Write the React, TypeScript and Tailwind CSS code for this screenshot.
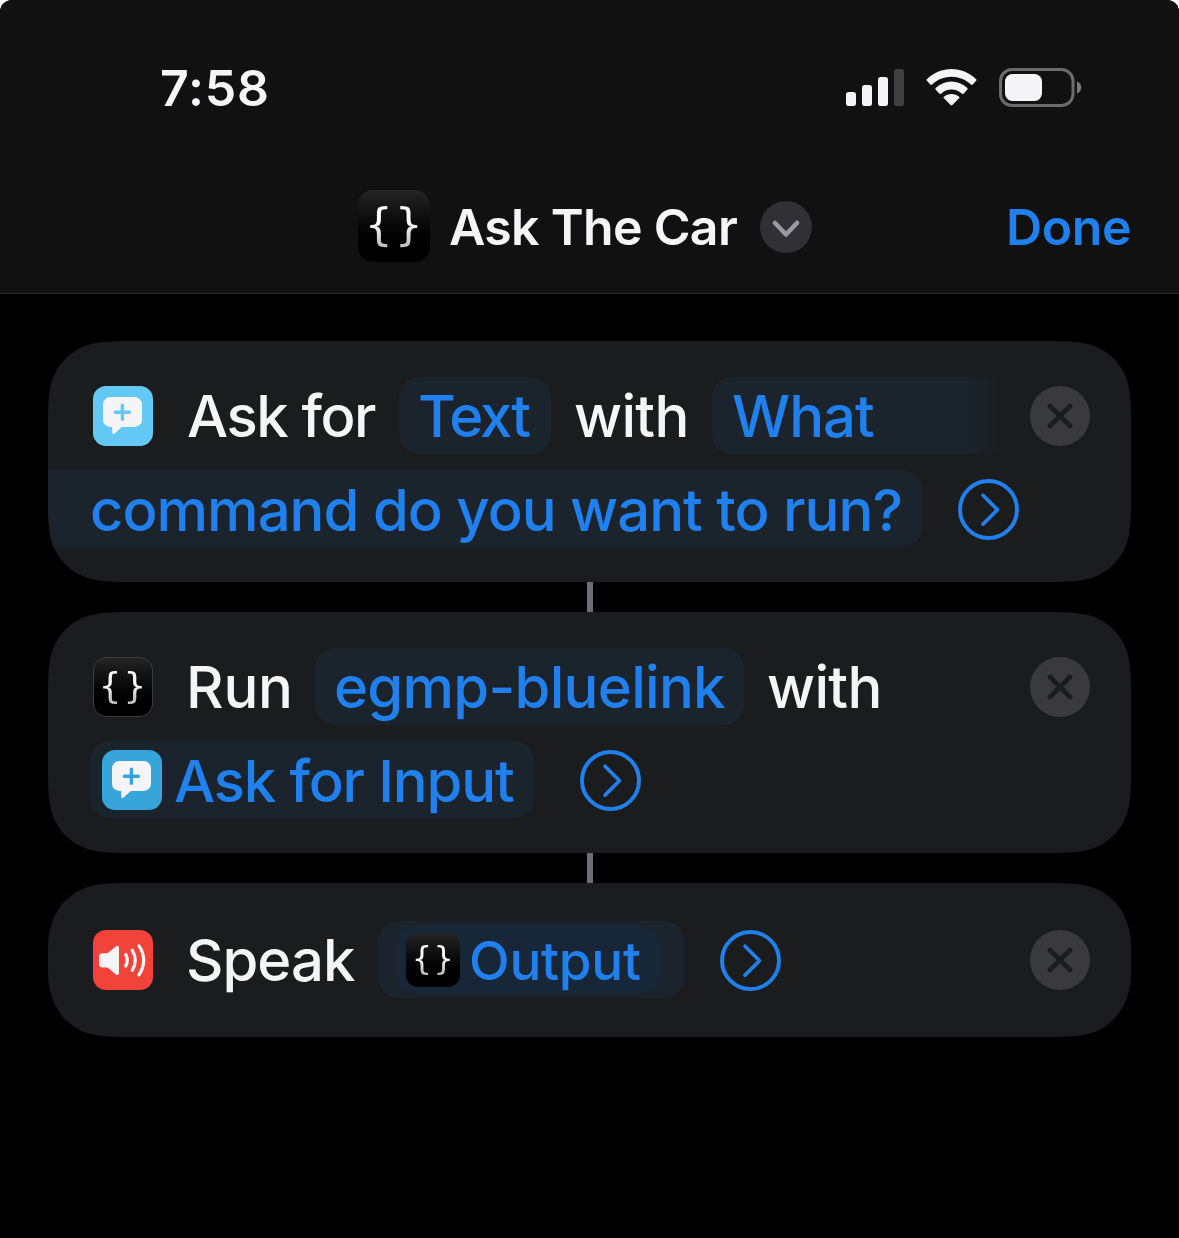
import type { ReactNode } from 'react';

/** Outline of a rectangle with continuous ("squircle") corners. */
function squircle(w: number, h: number, r: number) {
  const k = Math.min(1, h / 2 / (1.52866 * r));
  // corner control points, from the top edge to the right edge, as insets in units of r
  const pts: [number, number][] = [
    [1.52866, 0], [1.08849, 0], [0.868407, 0], [0.631494, 0.0749114],
    [0.372824, 0.16906], [0.16906, 0.372824], [0.0749114, 0.631494],
    [0, 0.868407], [0, 1.08849], [0, 1.52866],
  ];
  const p = pts.map(([x, y]) => [x * r, y * r * (y > 1 ? k : 1)]);
  const fmt = (q: number[][]) => {
    const s = q.map(([x, y]) => `${x.toFixed(2)} ${y.toFixed(2)}`);
    return `L${s[0]} C${s.slice(1, 4).join(' ')} C${s.slice(4, 7).join(' ')} C${s.slice(7, 10).join(' ')}`;
  };
  const rev = [...p].reverse();
  return (
    `M${w / 2} 0 ` +
    fmt(p.map(([x, y]) => [w - x, y])) +
    fmt(rev.map(([x, y]) => [w - x, h - y])) +
    fmt(p.map(([x, y]) => [x, h - y])) +
    fmt(rev.map(([x, y]) => [x, y])) +
    'Z'
  );
}

function Card({ height, children }: { height: number; children: ReactNode }) {
  return (
    <section
      className="flex w-[1083px] flex-col gap-4 bg-[#1b1c1d] pr-[41px] pl-[45px]"
      style={{ height, clipPath: `path('${squircle(1083, height, 60)}')` }}
    >
      {children}
    </section>
  );
}

function Connector() {
  return <div className="ml-[539px] h-[30px] w-1.5 bg-[#6b6d75]" />;
}

function BubbleIcon({ className }: { className: string }) {
  return (
    <svg viewBox="0 0 60 60" className={`size-[60px] shrink-0 rounded-[13px] ${className}`}>
      <path
        fill="#f5f5f7"
        d="M17.300 11h24.400a7.300 7.300 0 0 1 7.300 7.300v15.400a7.300 7.300 0 0 1-7.300 7.300H28.800l-7.100 6.600c-1 .9-2.500.3-2.500-1.100V41h-1.900a7.300 7.300 0 0 1-7.300-7.300V18.300a7.300 7.300 0 0 1 7.300-7.300Z"
      />
      <path d="M29.400 19.300v14M22.400 26.300h14" stroke="currentColor" strokeWidth="3.400" strokeLinecap="round" />
    </svg>
  );
}

function SpeakerIcon() {
  return (
    <svg viewBox="0 0 60 60" className="size-[60px] shrink-0 rounded-[13px] bg-[#f14339]" fill="none">
      <path
        fill="#f5f5f7"
        d="M9.500 23.300h4.300c.7 0 1.200-.2 1.700-.7l7.300-6.200c1.500-1.200 3.200-.5 3.200 1.400v25.200c0 1.900-1.700 2.600-3.200 1.400l-7.300-6.200c-.5-.4-1-.7-1.700-.7H9.500c-2.300 0-3.500-1.200-3.500-3.400v-7.400c0-2.200 1.200-3.400 3.500-3.400Z"
      />
      <g stroke="#f5f5f7" strokeWidth="3.300" strokeLinecap="round">
        <path d="M32.700 24.600c2 3.600 2 7.800 0 11.400" />
        <path d="M39.200 20.300c4 6.200 4 13.800 0 20" />
        <path d="M46 15.900c6.200 9 6.200 19.900 0 28.900" />
      </g>
    </svg>
  );
}

function BracesIcon({ className }: { className: string }) {
  return (
    <div
      className={`flex shrink-0 items-center justify-center bg-linear-to-b from-[#252525] to-black leading-[1.3] font-['DejaVu_Sans_Mono',monospace] ${className}`}
    >
      <span className="bg-linear-to-b from-white from-45% to-[#c4c4c4] to-80% bg-clip-text text-transparent">{'{}'}</span>
    </div>
  );
}

function Expand({ className }: { className: string }) {
  return (
    <svg viewBox="0 0 61 61" className={`mt-px size-[61px] shrink-0 text-[#1f80ee] ${className}`} fill="none" stroke="currentColor">
      <circle cx="30.500" cy="30.500" r="28.500" strokeWidth="4" />
      <path d="M25 16.300 39.500 30.700 25 45.100" strokeWidth="3.700" strokeLinecap="round" strokeLinejoin="round" />
    </svg>
  );
}

function Remove() {
  return (
    <svg viewBox="0 0 60 60" className="ml-auto size-[60px] shrink-0 rounded-full bg-[#3a393e]" fill="none">
      <path d="M20 20 40 40M40 20 20 40" stroke="#1b1c1d" strokeWidth="4.700" strokeLinecap="round" />
    </svg>
  );
}

const row = 'flex h-[77px] shrink-0 items-center whitespace-nowrap';
const pill = 'flex h-[77px] shrink-0 items-center rounded-[20px] bg-[#1b232c] text-[#1f80ee]';

function StatusIcons() {
  return (
    <div className="-mt-0.5 flex items-center">
      <svg viewBox="0 0 58 38" className="h-[38px] w-[58px]" fill="#f5f5f7">
        <rect x="0" y="24" width="10" height="14" rx="2.800" />
        <rect x="16" y="17" width="10" height="21" rx="2.800" />
        <rect x="32" y="9" width="10" height="29" rx="2.800" />
        <rect x="48" y="1" width="10" height="37" rx="2.800" fill="#414141" />
      </svg>
      <svg viewBox="0 0 17 12.300" className="ml-[22px] h-[37px] w-[51px]" fill="#f5f5f7" preserveAspectRatio="none">
        <path d="M8.500 2.600c2.400 0 4.700.9 6.500 2.600.1.100.3.100.5 0l1.200-1.300c.2-.2.2-.4 0-.5C12.100-1.100 4.900-1.100.3 3.400c-.2.100-.2.300 0 .5l1.200 1.300c.2.100.4.100.5 0C3.800 3.500 6.100 2.600 8.500 2.600Z" />
        <path d="M8.500 6.800c1.300 0 2.600.5 3.500 1.400.2.100.4.100.5 0l1.300-1.400c.1-.1.100-.3 0-.5-3-2.900-7.600-2.900-10.600 0-.1.200-.1.400 0 .5l1.300 1.400c.1.100.3.100.5 0 .9-.9 2.200-1.400 3.500-1.400Z" />
        <path d="M11 9.700c.2-.1.200-.4 0-.5-1.400-1.200-3.600-1.200-5 0-.2.100-.2.400 0 .5l2.200 2.300c.2.200.4.200.6 0L11 9.700Z" />
      </svg>
      <svg viewBox="0 0 83 39" className="ml-[22px] h-[39px] w-[83px]" fill="none">
        <rect x="1.500" y="1.500" width="72.500" height="36" rx="11.500" stroke="#6c6c6c" strokeWidth="3" />
        <rect x="6" y="6" width="37" height="27" rx="7.500" fill="#f5f5f7" />
        <path d="M78 13.500c2.600 1 4.200 3.300 4.200 6s-1.600 5-4.200 6Z" fill="#7b7b7b" />
      </svg>
    </div>
  );
}

export default function App() {
  return (
    <div className="h-[1238px] w-[1179px] overflow-hidden bg-white font-['Inter',sans-serif]">
      <div className="flex h-full flex-col overflow-hidden rounded-t-[12px] bg-black">
        <header className="h-[294px] shrink-0 border-b border-[#2a2a2b] bg-[#111111] pt-[63px]">
          <div className="flex h-[50px] items-center justify-between pr-[97px] pl-[160px]">
            <span className="text-[50px] leading-none font-semibold tracking-[0.8px] text-[#f5f5f7]">7:58</span>
            <StatusIcons />
          </div>
          <div className="mt-[77px] flex h-[72px] items-center pl-[358px] whitespace-nowrap">
            <BracesIcon className="size-[72px] rounded-[15px] pb-0.5 pl-[3px] text-[44px] tracking-[3.500px]" />
            <h1 className="mt-0.5 ml-[19px] w-[311px] text-[50px] leading-[74px] font-semibold tracking-[-0.7px] text-[#f5f5f7]">
              Ask The Car
            </h1>
            <svg viewBox="0 0 52 52" className="mt-0.5 size-[52px] shrink-0 rounded-full bg-[#313034]" fill="none">
              <path d="M15 22 26 33.500 37 22" stroke="#9b9aa0" strokeWidth="4.600" strokeLinecap="round" strokeLinejoin="round" />
            </svg>
            <span className="mt-0.5 ml-[194px] text-[50px] leading-[74px] font-semibold tracking-[-0.4px] text-[#1f80ee]">
              Done
            </span>
          </div>
        </header>

        <main className="flex flex-col pt-[47px] pl-12 text-[58px] leading-none font-medium text-[#f5f5f7]">
          <Card height={241}>
            <div className={`${row} mt-9`}>
              <BubbleIcon className="bg-[#63c8f3] text-[#63c8f3]" />
              <span className="ml-[34px] w-[212px] tracking-[-1.4px]">Ask for</span>
              <span className={`${pill} w-[152px] pl-[19px] tracking-[-2.1px]`}>Text</span>
              <span className="ml-[23px] w-[138px] tracking-[-0.7px]">with</span>
              <span className="flex h-[77px] w-[295px] shrink-0 items-center rounded-l-[20px] bg-linear-to-r from-[#1b232c] from-86% to-[#1b1c1d] pl-5 tracking-[-1px] text-[#1f80ee]">
                What
              </span>
              <Remove />
            </div>
            <div className={`${row} -ml-[45px]`}>
              <span className={`${pill} w-[874px] rounded-l-none pt-0.5 pl-[42px] tracking-[-0.97px]`}>
                command do you want to run?
              </span>
              <Expand className="ml-9" />
            </div>
          </Card>
          <Connector />
          <Card height={241}>
            <div className={`${row} mt-9`}>
              <BracesIcon className="size-[60px] rounded-[13px] border border-[#3c3c3c] pb-px pl-0.5 text-[36px] tracking-[3px]" />
              <span className="ml-[33px] w-[129px] tracking-[-0.2px]">Run</span>
              <span className={`${pill} w-[429px] pl-[19px] tracking-[-0.72px]`}>egmp-bluelink</span>
              <span className="ml-[23px] tracking-[-0.7px]">with</span>
              <Remove />
            </div>
            <div className={`${row} -ml-[3px]`}>
              <span className={`${pill} w-[444px] pl-3 tracking-[-1.15px]`}>
                <BubbleIcon className="bg-[#38a5da] text-[#38a5da]" />
                <span className="mt-0.5 ml-3">Ask for Input</span>
              </span>
              <Expand className="ml-[46px]" />
            </div>
          </Card>
          <Connector />
          <Card height={154}>
            <div className={`${row} mt-[38px]`}>
              <SpeakerIcon />
              <span className="ml-[33px] w-[192px] tracking-[-1px]">Speak</span>
              <span className={`${pill} w-[306px] pl-[19px]`}>
                <span className="flex h-[67px] w-[262px] items-center rounded-[18px] bg-[#182737] pl-[9px] text-[53px] tracking-[-0.25px]">
                  <BracesIcon className="size-[54px] rounded-[12px] pb-px pl-0.5 text-[32px] tracking-[2.500px]" />
                  <span className="mt-1 ml-[9px]">Output</span>
                </span>
              </span>
              <Expand className="ml-9" />
              <Remove />
            </div>
          </Card>
        </main>
      </div>
    </div>
  );
}
